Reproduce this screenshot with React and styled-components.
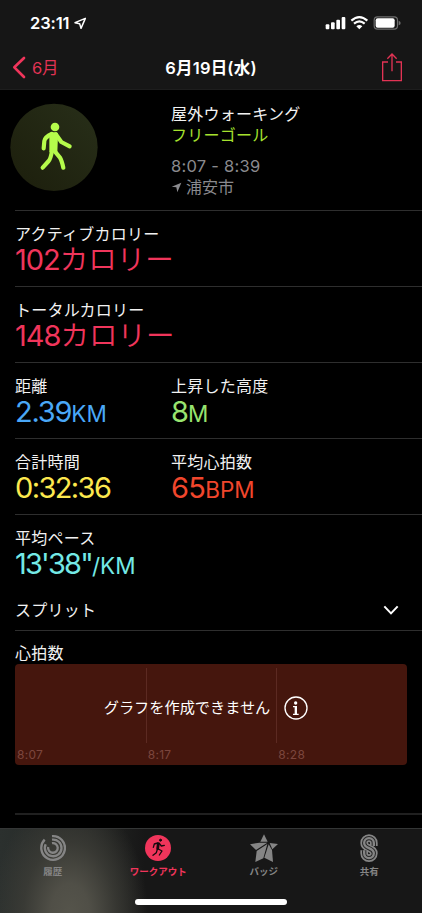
import styled, { createGlobalStyle } from "styled-components"

const metrics = [
    [{ label: "アクティブカロリー", value: "102", unit: "カロリー", color: "#f0355b", spacing: "-1px", kana: true }],
    [{ label: "トータルカロリー", value: "148", unit: "カロリー", color: "#f0355b", spacing: "-1px", kana: true }],
    [
        { label: "距離", value: "2.39", unit: "KM", color: "#4aa8f7", spacing: "-1.2px" },
        { label: "上昇した高度", value: "8", unit: "M", color: "#98e46f", spacing: "-1px" }
    ],
    [
        { label: "合計時間", value: "0:32:36", unit: "", color: "#fce84e", spacing: "-1.6px" },
        { label: "平均心拍数", value: "65", unit: "BPM", color: "#f1462c", spacing: "-0.7px" }
    ],
    [{ label: "平均ペース", value: "13'38\"", unit: "/KM", color: "#74e9e6", spacing: "-1.8px" }]
]

const chartTimes = ["8:07", "8:17", "8:28"]

export default function App() {
    return (
        <Screen>
            <GlobalStyle />
            <Header>
                <StatusBar>
                    <Clock>23:11<ArrowOutline /></Clock>
                    <StatusIcons />
                </StatusBar>
                <NavBar>
                    <BackButton><BackIcon />6月</BackButton>
                    <NavTitle>6月19日(水)</NavTitle>
                    <ShareIcon />
                </NavBar>
            </Header>

            <Content>
                <Summary>
                    <WalkBadge />
                    <SummaryText>
                        <Label>屋外ウォーキング</Label>
                        <Goal>フリーゴール</Goal>
                        <Period>8:07 - 8:39</Period>
                        <Place><ArrowSolid />浦安市</Place>
                    </SummaryText>
                </Summary>

                {metrics.map((row, i) =>
                    <MetricRow key={i}>
                        {row.map(e =>
                            <Metric key={e.label}>
                                <Label>{e.label}</Label>
                                <Value $color={e.color}>
                                    <Amount $spacing={e.spacing}>{e.value}</Amount>
                                    <Unit $kana={e.kana}>{e.unit}</Unit>
                                </Value>
                            </Metric>
                        )}
                    </MetricRow>
                )}

                <SplitRow>
                    <Label>スプリット</Label>
                    <ChevronIcon />
                </SplitRow>

                <HeartSection>
                    <Label>心拍数</Label>
                    <Chart>
                        {chartTimes.map((time, i) =>
                            <ChartColumn key={time}>
                                <ChartLine $hidden={i === 0} />
                                <ChartTime>{time}</ChartTime>
                            </ChartColumn>
                        )}
                        <ChartMessage>グラフを作成できません<InfoIcon /></ChartMessage>
                    </Chart>
                </HeartSection>
                <Divider />
            </Content>

            <Footer>
                <Tabs>
                    <Tab><RingsIcon />履歴</Tab>
                    <Tab $active><RunnerIcon />ワークアウト</Tab>
                    <Tab><StarIcon />バッジ</Tab>
                    <Tab><SharingIcon />共有</Tab>
                </Tabs>
                <HomeIndicator />
            </Footer>
        </Screen>
    )
}

function ArrowOutline() {
    return (
        <svg width="13" height="13" viewBox="222 50 39 39" fill="none" stroke="#fff" strokeWidth="4.5" strokeLinejoin="round">
            <path d="M256 54 L225 67 L239 70 L243 84 Z" />
        </svg>
    )
}

function ArrowSolid() {
    return (
        <svg width="11" height="11" viewBox="93 262 33 33" fill="#8a8a8e">
            <path d="M124 264 L95 276 L109 278 L112 293 Z" />
        </svg>
    )
}

function StatusIcons() {
    return (
        <svg width="77" height="16" viewBox="340 45 231 48" fill="#fff">
            <rect x="342" y="73" width="11" height="15" rx="3" />
            <rect x="358" y="67" width="11" height="21" rx="3" />
            <rect x="374" y="59" width="11" height="29" rx="3" />
            <rect x="390" y="51" width="11" height="37" rx="3" />
            <g fill="none" stroke="#fff" strokeWidth="6.5">
                <path d="M419 62 Q443 41 467 62" />
                <path d="M427 71 Q443 57 459 71" />
            </g>
            <path d="M434 79 Q443 71 452 79 L443 88 Z" />
            <rect x="487.500" y="50.500" width="70" height="37" rx="10" fill="none" stroke="#6e6e6e" strokeWidth="3.500" />
            <rect x="492" y="55" width="57" height="28" rx="6" />
            <path d="M561 62 Q567 64 567 69 Q567 74 561 76 Z" fill="#6e6e6e" />
        </svg>
    )
}

function BackIcon() {
    return (
        <svg width="14" height="23" viewBox="37 168 42 69" fill="none" stroke="#f0355b" strokeWidth="8" strokeLinecap="round" strokeLinejoin="round">
            <path d="M73 174 L44 202 L73 231" />
        </svg>
    )
}

function ShareIcon() {
    return (
        <svg width="22" height="30" viewBox="510 158 66 90" fill="none" stroke="#e23354" strokeWidth="4">
            <path d="M531 185 H515 V241 H571 V185 H555" />
            <path d="M543 213 V162 M529 175 L543 161 L557 175" />
        </svg>
    )
}

function WalkBadge() {
    return (
        <svg width="88" height="88" viewBox="29 24 264 264">
            <defs>
                <linearGradient id="badge" x1="0" y1="1" x2="1" y2="0">
                    <stop offset="0" stopColor="#1c1e0c" />
                    <stop offset="1" stopColor="#282f19" />
                </linearGradient>
            </defs>
            <circle cx="161" cy="157" r="131" fill="url(#badge)" />
            <circle cx="164" cy="96" r="13" fill="#b5fb4b" />
            <path d="M152 112 H169 Q174 113 173 121 L171 172 L147 172 L147 117 Z" fill="#b5fb4b" />
            <g fill="none" stroke="#b5fb4b" strokeWidth="12.5" strokeLinecap="round" strokeLinejoin="round">
                <path d="M154 117 Q134 126 132 138 L130 160" />
                <path d="M167 118 L183 141 L208 154" />
                <path d="M155 168 Q151 191 145 198 L127 218" />
                <path d="M164 170 L179 188 Q184 196 189 218" />
            </g>
        </svg>
    )
}

function ChevronIcon() {
    return (
        <svg width="16" height="11" viewBox="517 53 48 33" fill="none" stroke="#fff" strokeWidth="6">
            <path d="M521 57 L541 78 L561 57" />
        </svg>
    )
}

function InfoIcon() {
    return (
        <svg width="24" height="24" viewBox="221 317 72 72" fill="#fff">
            <circle cx="257" cy="353" r="33" fill="none" stroke="#fff" strokeWidth="4" />
            <circle cx="256" cy="338" r="5" />
            <path d="M248 347 H260 V370 H265 V374 H248 V370 H253 V351 H248 Z" />
        </svg>
    )
}

function RingsIcon() {
    return (
        <svg width="26" height="26" viewBox="-39 -39 78 78" fill="none" stroke="#858585" strokeWidth="7">
            <path d="M-3 -35.500 A35.500 35.500 0 1 1 -25 -25" />
            <path d="M-3 -25 A25 25 0 1 1 -22 -11" />
            <path d="M-3 -14.500 A14.500 14.500 0 1 1 -14.500 -3" />
        </svg>
    )
}

function RunnerIcon() {
    return (
        <svg width="26" height="26" viewBox="436 105 78 78">
            <circle cx="475" cy="144" r="39" fill="#f0355b" />
            <g fill="none" stroke="#160a0d" strokeWidth="4" strokeLinecap="round" strokeLinejoin="round">
                <circle cx="482.500" cy="120.500" r="3" fill="#160a0d" strokeWidth="3" />
                <path d="M476 131 L474 146" strokeWidth="8.500" />
                <path d="M474 129 L464 132 L461 142" />
                <path d="M479 130 L485 138 L494 136" />
                <path d="M476 147 L487 153 L479 165" />
                <path d="M473 148 L470 158 L460 166" />
            </g>
        </svg>
    )
}

function StarIcon() {
    return (
        <svg width="28" height="28" viewBox="116 103 84 84" fill="#858585">
            <path d="M158 104 L169 126 L147 126 Z" />
            <path d="M116 134 L144 129 L168 129 L134 151 Z" />
            <path d="M175 130 L200 133 L183 149 Z" />
            <path d="M168 133 L156 176 L132 187 L136 154 Z" />
            <path d="M172 134 L182 151 L185 187 L159 174 Z" />
        </svg>
    )
}

function SharingIcon() {
    const s = "M489.500 137 V128 A14.500 14.500 0 0 0 460.500 128 C460.500 147 489.500 140 489.500 159 A14.500 14.500 0 0 1 460.500 159 V150"
    return (
        <svg width="20" height="28" viewBox="445 101 60 84" fill="none">
            <path d={s} stroke="#858585" strokeWidth="23" />
            <path d={s} stroke="#262626" strokeWidth="13" />
            <path d={s} stroke="#858585" strokeWidth="7" />
        </svg>
    )
}

const GlobalStyle = createGlobalStyle`
    * {
        box-sizing: border-box;
    }
    body {
        margin: 0;
        background-color: #000;
        color: #fff;
        font-family: Inter, "Noto Sans CJK JP", sans-serif;
    }
    svg {
        display: block;
        flex-shrink: 0;
    }
`
const Screen = styled.div`
    display: flex;
    flex-direction: column;
    width: 422px;
    height: 913px;
    overflow: hidden;
    background-color: #000;
`
const Header = styled.header`
    height: 90px;
    background-color: #161616;
    border-bottom: 1px solid #1d1d1d;
`
const StatusBar = styled.div`
    height: 45px;
    display: flex;
    align-items: center;
    justify-content: space-between;
    padding: 1px 20px 0 30px;
`
const Clock = styled.div`
    display: flex;
    align-items: center;
    gap: 4px;
    font-size: 16.5px;
    font-weight: 600;
    letter-spacing: -0.1px;
`
const NavBar = styled.div`
    height: 45px;
    display: grid;
    grid-template-columns: 1fr auto 1fr;
    align-items: center;
    padding: 0 19px;
    > svg {
        justify-self: end;
    }
`
const BackButton = styled.div`
    display: flex;
    align-items: center;
    gap: 6px;
    margin-left: -7px;
    color: #e23354;
    font-size: 16.5px;
    line-height: 24px;
    letter-spacing: -0.3px;
`
const NavTitle = styled.div`
    font-size: 16.5px;
    font-weight: 600;
    line-height: 24px;
    letter-spacing: 0.2px;
`
const Content = styled.main`
    flex: 1;
    min-height: 0;
    padding-left: 15px;
`
const Summary = styled.section`
    height: 120px;
    display: flex;
    padding-top: 13px;
    margin-left: -5px;
`
const SummaryText = styled.div`
    padding: 1px 0 0 73px;
`
const Label = styled.div`
    font-size: 16px;
    line-height: 20px;
    letter-spacing: 0.25px;
    color: #f2f2f2;
`
const Goal = styled(Label)`
    margin-top: 1px;
    color: #a6e22e;
`
const Period = styled(Label)`
    margin-top: 11px;
    font-size: 16.5px;
    color: #8a8a8e;
`
const Place = styled(Label)`
    display: flex;
    align-items: center;
    gap: 4px;
    margin-top: 1px;
    letter-spacing: 0;
    color: #8a8a8e;
`
const MetricRow = styled.section`
    height: 76px;
    display: flex;
    padding-top: 13px;
    border-top: 1px solid #2e2e2e;
`
const Metric = styled.div`
    width: 156px;
    white-space: nowrap;
`
const Value = styled.div`
    display: flex;
    align-items: baseline;
    font-size: 29px;
    line-height: 32px;
    color: ${props => props.$color};
`
const Amount = styled.span`
    letter-spacing: ${props => props.$spacing};
`
const Unit = styled.span`
    font-size: ${props => (props.$kana ? "28.5px" : "22.5px")};
    font-weight: ${props => (props.$kana ? 350 : 400)};
`
const SplitRow = styled.section`
    height: 40px;
    display: flex;
    align-items: center;
    justify-content: space-between;
    padding-right: 23px;
`
const HeartSection = styled.section`
    height: 183px;
    padding: 12px 15px 0 0;
    border-top: 1px solid #2e2e2e;
`
const Chart = styled.div`
    position: relative;
    height: 101px;
    margin-top: 1px;
    display: grid;
    grid-template-columns: repeat(3, 1fr);
    border-radius: 4px;
    background-color: #45160d;
`
const ChartColumn = styled.div`
    display: flex;
    flex-direction: column;
    padding-top: 4px;
`
const ChartLine = styled.div`
    width: 1px;
    height: 75px;
    background-color: ${props => (props.$hidden ? "transparent" : "#5c2a22")};
`
const ChartTime = styled.div`
    margin-top: 4px;
    padding-left: 2px;
    font-size: 12px;
    line-height: 15px;
    letter-spacing: 0.3px;
    color: #7c463d;
`
const ChartMessage = styled.div`
    position: absolute;
    inset: 0 10px 14px 0;
    display: flex;
    align-items: center;
    justify-content: center;
    gap: 14px;
    font-size: 15.2px;
    line-height: 20px;
    white-space: nowrap;
`
const Divider = styled.div`
    height: 2px;
    background-color: #202020;
`
const Footer = styled.footer`
    height: 85px;
    display: flex;
    flex-direction: column;
    align-items: center;
    border-top: 1px solid #343636;
    background: radial-gradient(ellipse 78px 120px at 70px 85px, #55544b 0%, #504f47 25%, rgba(62, 62, 56, 0.75) 60%, transparent 100%),
        linear-gradient(90deg, #2b302e 0, #242624 90px, #171717 145px, #171717 100%);
`
const Tabs = styled.nav`
    width: 100%;
    height: 70px;
    display: grid;
    grid-template-columns: repeat(4, 1fr);
`
const Tab = styled.div`
    display: flex;
    flex-direction: column;
    align-items: center;
    padding-top: 5px;
    font-size: 9.5px;
    font-weight: 700;
    line-height: 14px;
    color: ${props => (props.$active ? "#f0355b" : "#858585")};
    svg {
        height: 28px;
        margin-bottom: 3px;
    }
`
const HomeIndicator = styled.div`
    width: 152px;
    height: 6px;
    border-radius: 3px;
    background-color: #fff;
`
